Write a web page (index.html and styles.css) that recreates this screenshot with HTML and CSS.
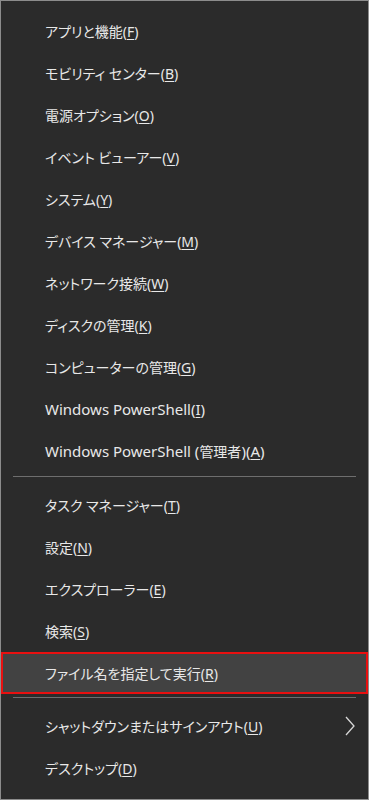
FILE: index.html
```html
<!DOCTYPE html>
<html lang="ja">
<head>
<meta charset="utf-8">
<link rel="stylesheet" href="styles.css">
</head>
<body>
<div class="menu">
  <div class="item">アプリと機能(<u>F</u>)</div>
  <div class="item">モビリティ センター(<u>B</u>)</div>
  <div class="item">電源オプション(<u>O</u>)</div>
  <div class="item">イベント ビューアー(<u>V</u>)</div>
  <div class="item">システム(<u>Y</u>)</div>
  <div class="item">デバイス マネージャー(<u>M</u>)</div>
  <div class="item">ネットワーク接続(<u>W</u>)</div>
  <div class="item">ディスクの管理(<u>K</u>)</div>
  <div class="item">コンピューターの管理(<u>G</u>)</div>
  <div class="item"><span class="en">Windows PowerShell(<u>I</u>)</span></div>
  <div class="item"><span class="en">Windows PowerShell (</span>管理者<span class="en">)(<u>A</u>)</span></div>
  <div class="sep"></div>
  <div class="item">タスク マネージャー(<u>T</u>)</div>
  <div class="item">設定(<u>N</u>)</div>
  <div class="item">エクスプローラー(<u>E</u>)</div>
  <div class="item">検索(<u>S</u>)</div>
  <div class="item selected">ファイル名を指定して実行(<u>R</u>)</div>
  <div class="sep sep2"></div>
  <div class="item has-sub">
    <span>シャットダウンまたはサインアウト(<u>U</u>)</span>
    <svg class="chev" width="12" height="20" viewBox="0 0 12 20"><polyline points="2,1 10,10 2,19" fill="none" stroke="#d8d8d8" stroke-width="1.3"/></svg>
  </div>
  <div class="item">デスクトップ(<u>D</u>)</div>
</div>
</body>
</html>
```
FILE: styles.css
```css
html, body {
  margin: 0;
  padding: 0;
  background: #2b2b2b;
}
.menu {
  box-sizing: border-box;
  width: 369px;
  height: 800px;
  border: 1px solid #8c8c8c;
  background: #2b2b2b;
  padding-top: 9px;
  font-family: "Noto Sans", "Noto Sans CJK JP", sans-serif;
  font-size: 14px;
  font-feature-settings: "palt";
  color: #e8e8e8;
}
.item {
  box-sizing: border-box;
  height: 42px;
  display: flex;
  align-items: center;
  padding-left: 44px;
  padding-right: 12px;
  white-space: pre;
}
.item .en {
  font-size: 15px;
}
.item u {
  text-decoration-thickness: 1px;
  text-underline-offset: 2px;
}
.item.selected {
  background: #424242;
  border: 2px solid #e81010;
  padding-left: 42px;
}
.has-sub {
  justify-content: space-between;
}
.chev {
  display: block;
}
.sep {
  height: 1px;
  background: #6e6e6e;
  margin: 4px 12px 7px 12px;
}
.sep2 {
  margin: 3px 12px 7px 12px;
}
```
